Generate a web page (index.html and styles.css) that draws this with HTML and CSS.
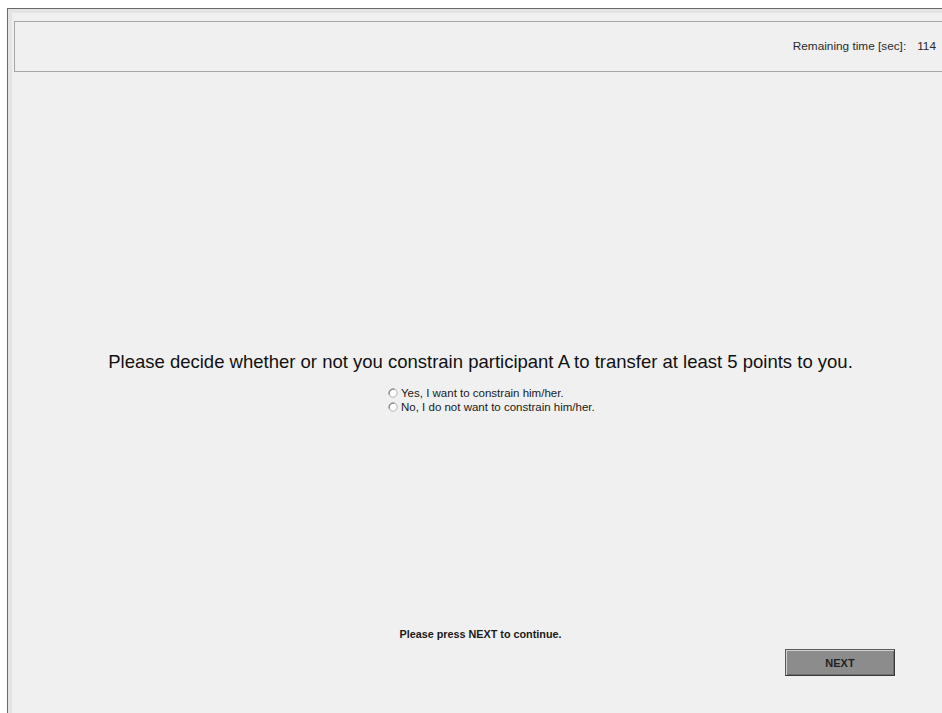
FILE: index.html
```html
<!DOCTYPE html>
<html lang="en">
<head>
<meta charset="utf-8">
<title>Decision</title>
<link rel="stylesheet" href="styles.css">
</head>
<body>
<div class="frame">
  <div class="header">
    <span class="timer-label">Remaining time [sec]:</span>
    <span class="timer-value">114</span>
  </div>
  <div class="main">
    <p class="question">Please decide whether or not you constrain participant A to transfer at least 5 points to you.</p>
    <div class="options">
      <label class="option">
        <svg class="radio" width="10" height="10" viewBox="0 0 10 10"><circle cx="5" cy="5" r="4.2" fill="#fff" stroke="#b0b0b0" stroke-width="1"/><path d="M1.3 6.5 A4.2 4.2 0 0 1 6.5 1.3" fill="none" stroke="#707070" stroke-width="1"/></svg>
        <span>Yes, I want to constrain him/her.</span>
      </label>
      <label class="option">
        <svg class="radio" width="10" height="10" viewBox="0 0 10 10"><circle cx="5" cy="5" r="4.2" fill="#fff" stroke="#b0b0b0" stroke-width="1"/><path d="M1.3 6.5 A4.2 4.2 0 0 1 6.5 1.3" fill="none" stroke="#707070" stroke-width="1"/></svg>
        <span>No, I do not want to constrain him/her.</span>
      </label>
    </div>
  </div>
  <div class="footer">
    <p class="hint">Please press NEXT to continue.</p>
    <div class="actions">
      <button class="next" type="button">NEXT</button>
    </div>
  </div>
</div>
</body>
</html>
```
FILE: styles.css
```css
html, body {
  margin: 0;
  padding: 0;
  background: #ffffff;
  overflow: hidden;
  height: 100%;
}

body {
  font-family: "Liberation Sans", Arial, sans-serif;
  color: #1a1a1a;
}

.frame {
  box-sizing: border-box;
  margin: 8px 0 0 7px;
  width: 940px;
  height: 705px;
  background: #f0f0f0;
  border-top: 1px solid #6a6a6a;
  border-left: 1px solid #6a6a6a;
  box-shadow: inset 4px 4px 0 #e4e4e4;
  padding: 12px 0 0 6px;
  display: flex;
  flex-direction: column;
}

.header {
  box-sizing: border-box;
  height: 51px;
  border: 1px solid #a5a5a5;
  border-right: none;
  display: flex;
  align-items: center;
  justify-content: flex-end;
  padding: 0 6px 1px 0;
  font-size: 11.8px;
  color: #2a2a2a;
  width: 928px;
}

.timer-value {
  margin-left: 11px;
}

.main {
  display: flex;
  flex-direction: column;
  align-items: center;
  padding-top: 280px;
}

.question {
  margin: 0;
  font-size: 18.5px;
  line-height: 20px;
  color: #111;
}

.options {
  align-self: flex-start;
  margin: 14px 0 0 374px;
  display: flex;
  flex-direction: column;
}

.option {
  display: flex;
  align-items: center;
  height: 14px;
  font-size: 11.5px;
  color: #1a1a1a;
}

.radio {
  margin-right: 3px;
}

.footer {
  margin-top: auto;
  padding-bottom: 37px;
  display: flex;
  flex-direction: column;
  align-items: center;
}

.hint {
  margin: 0;
  font-size: 10.8px;
  font-weight: bold;
  line-height: 14px;
  color: #1a1a1a;
}

.actions {
  align-self: stretch;
  display: flex;
  justify-content: flex-end;
  padding-right: 52px;
  margin-top: 8px;
}

.next {
  box-sizing: border-box;
  width: 110px;
  height: 27px;
  background: #8c8c8c;
  border: 1px solid #3a3a3a;
  border-top-color: #5a5a5a;
  border-left-color: #5a5a5a;
  box-shadow: inset 1px 1px 0 #d4d4d4, inset -1px -1px 0 #6e6e6e;
  font-family: "Liberation Sans", Arial, sans-serif;
  font-size: 11px;
  font-weight: bold;
  color: #222;
  padding: 0;
}
```
